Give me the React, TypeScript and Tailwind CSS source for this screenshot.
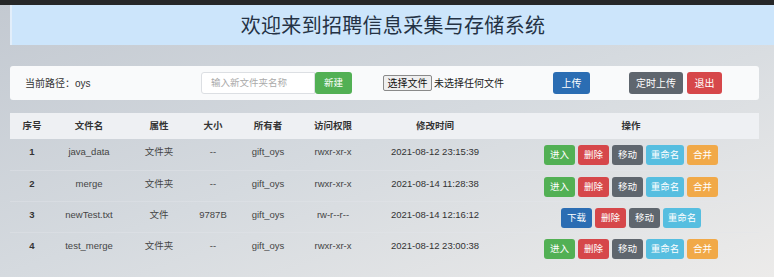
import React from "react";

type Row = {
  id: number;
  name: string;
  type: string;
  size: string;
  owner: string;
  perm: string;
  time: string;
  dir: boolean;
};

const rows: Row[] = [
  { id: 1, name: "java_data", type: "文件夹", size: "--", owner: "gift_oys", perm: "rwxr-xr-x", time: "2021-08-12 23:15:39", dir: true },
  { id: 2, name: "merge", type: "文件夹", size: "--", owner: "gift_oys", perm: "rwxr-xr-x", time: "2021-08-14 11:28:38", dir: true },
  { id: 3, name: "newTest.txt", type: "文件", size: "9787B", owner: "gift_oys", perm: "rw-r--r--", time: "2021-08-14 12:16:12", dir: false },
  { id: 4, name: "test_merge", type: "文件夹", size: "--", owner: "gift_oys", perm: "rwxr-xr-x", time: "2021-08-12 23:00:38", dir: true },
];

const grid = "grid grid-cols-[44px_70px_70px_38px_72px_58px_146px_246px]";

function Btn({ label, cls, w = "w-[31px]" }: { label: string; cls: string; w?: string }) {
  return (
    <span className={`${w} h-[20px] rounded-[3px] flex items-center justify-center text-[9.5px] text-white ${cls}`}>
      {label}
    </span>
  );
}

export default function App() {
  return (
    <div className="w-[774px] h-[277px] overflow-hidden bg-gradient-to-br from-[#c3c9d1] via-[#d5dadf] to-[#ecebea] font-['Liberation_Sans','Noto_Sans_CJK_SC',sans-serif] text-[#454545]">
      <div className="h-[5px] bg-[#262728]" />
      <div className="ml-[10px] h-[40px] bg-[#cce5fb] border-l-2 border-[#e2eefa] flex items-center justify-center text-[20px] text-[#243244] font-['Noto_Sans_CJK_SC',sans-serif] tracking-[0.3px]">
        欢迎来到招聘信息采集与存储系统
      </div>

      <div className="mx-[10px] mt-[21px] w-[749px] h-[34px] bg-[#f9fafb] rounded-[3px] flex items-center pl-[15px]">
        <span className="w-[176px] text-[10px] text-[#333]">当前路径：oys</span>
        <span className="w-[114px] h-[22px] bg-white border border-[#dcdfe3] rounded-l-[3px] flex items-center pl-[9px] text-[9.5px] text-[#aaa]">
          输入新文件夹名称
        </span>
        <Btn label="新建" cls="bg-[#52b054]" w="w-[37px] h-[22px]" />
        <span className="ml-[31px] w-[49px] h-[16px] bg-[#efefef] border border-[#8a8a8a] rounded-[2px] flex items-center justify-center text-[10px] text-[#111]">
          选择文件
        </span>
        <span className="ml-[2px] w-[119px] text-[10px] text-[#222]">未选择任何文件</span>
        <span className="w-[37px] h-[22px] rounded-[3px] bg-[#2b6db3] flex items-center justify-center text-[10px] text-white">上传</span>
        <span className="ml-[39px] w-[54px] h-[22px] rounded-[3px] bg-[#5f666e] flex items-center justify-center text-[10px] text-white">定时上传</span>
        <span className="ml-[4px] w-[35px] h-[22px] rounded-[3px] bg-[#d6474a] flex items-center justify-center text-[10px] text-white">退出</span>
      </div>

      <div className="mx-[10px] mt-[13px] w-[749px]">
        <div className={`${grid} h-[26px] items-center bg-[#eef0f3] text-[9.5px] font-bold text-[#333] text-center`}>
          <span>序号</span>
          <span>文件名</span>
          <span>属性</span>
          <span>大小</span>
          <span>所有者</span>
          <span>访问权限</span>
          <span>修改时间</span>
          <span>操作</span>
        </div>
        {rows.map((r, i) => (
          <div
            key={r.id}
            className={`${grid} h-[31px] items-start text-center text-[9.5px] leading-[12px] ${i > 0 ? "border-t border-[#e3e6ea]/40" : ""}`}
          >
            <span className="pt-[7px] font-bold text-[#333]">{r.id}</span>
            <span className="pt-[7px]">{r.name}</span>
            <span className="pt-[7px]">{r.type}</span>
            <span className="pt-[7px]">{r.size}</span>
            <span className="pt-[7px]">{r.owner}</span>
            <span className="pt-[7px]">{r.perm}</span>
            <span className="pt-[7px] text-[#333]">{r.time}</span>
            <span className="pt-[6px] flex justify-center gap-[3px]">
              {r.dir ? <Btn label="进入" cls="bg-[#52b054]" /> : <Btn label="下载" cls="bg-[#2b6db3]" />}
              <Btn label="删除" cls="bg-[#d6474a]" />
              <Btn label="移动" cls="bg-[#5f666e]" />
              <Btn label="重命名" cls="bg-[#56bee0]" w="w-[38px]" />
              {r.dir && <Btn label="合并" cls="bg-[#f1a948]" />}
            </span>
          </div>
        ))}
      </div>
    </div>
  );
}
